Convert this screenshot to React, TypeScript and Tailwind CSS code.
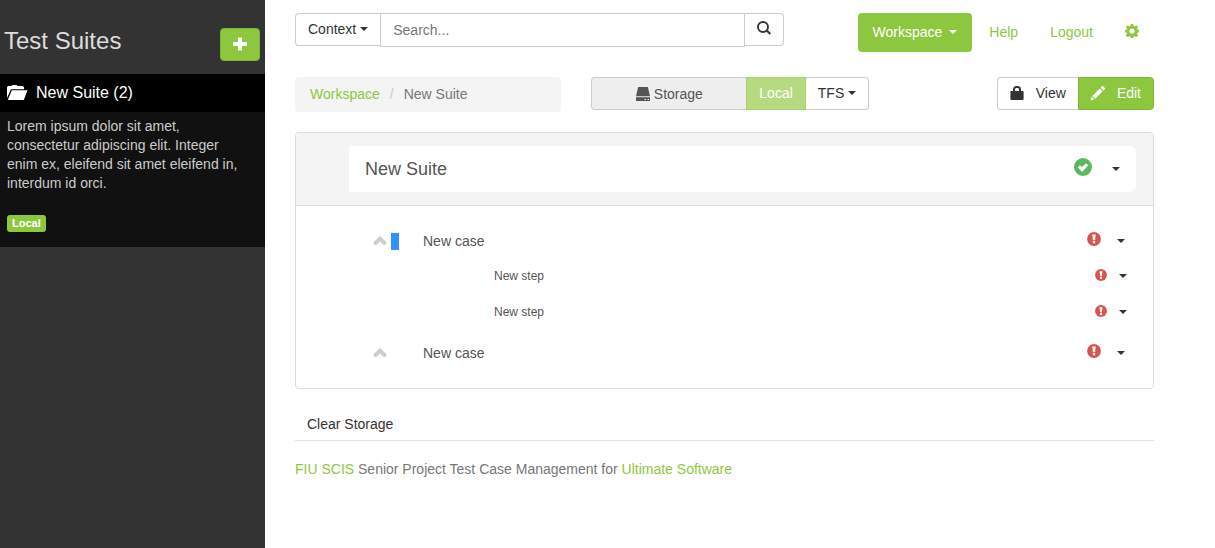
import type { ReactNode } from "react";

function Glyph({ className, children }: { className: string; children: ReactNode }) {
  return (
    <svg viewBox="0 0 14 14" fill="currentColor" aria-hidden="true" className={`shrink-0 ${className}`}>
      {children}
    </svg>
  );
}

function Caret({ className = "" }: { className?: string }) {
  return (
    <svg viewBox="0 0 8 4" fill="currentColor" aria-hidden="true" className={`h-1 w-2 shrink-0 ${className}`}>
      <path d="M0 0h8L4 4z" />
    </svg>
  );
}

function Plus() {
  return (
    <Glyph className="size-3.5">
      <path d="M5 0.5h4v4.500h5v4H9v4.500H5V9H0V5h5z" />
    </Glyph>
  );
}

function FolderOpen() {
  return (
    <svg viewBox="0 0 21 16" fill="currentColor" aria-hidden="true" className="h-4 w-[21px] shrink-0">
      <path d="M0 13V2L1.200 1H4.500L5.500 0h4l1 1H15.800L17 2.200V4.200H4L1.600 9.500z" />
      <path d="M4.800 5.300H20.500L16.800 15H.8z" />
    </svg>
  );
}

function Magnifier() {
  return (
    <Glyph className="size-3.5">
      <circle cx="6" cy="6" r="5" fill="none" stroke="currentColor" strokeWidth="1.900" />
      <path d="M8.800 10.100l1.500-1.500 3.700 3.600-1.500 1.600z" />
    </Glyph>
  );
}

function Gear() {
  return (
    <Glyph className="size-3.5">
      <path
        fillRule="evenodd"
        d="M5.800 0h2.400l.5 2 .9.400 1.800-1.100 1.700 1.700-1.100 1.800.4.900 1.600.4v2.200l-1.600.5-.4.900 1.100 1.800-1.700 1.700-1.800-1.100-.9.400-.5 1.500H5.800l-.5-1.500-.9-.4-1.800 1.100-1.700-1.700L2 9.700l-.4-.9L0 8.300V6.100l1.600-.4.4-.9L.9 3l1.700-1.700 1.800 1.100.9-.4zM7 4.500a2.600 2.600 0 1 0 0 5.200 2.600 2.600 0 0 0 0-5.200z"
      />
    </Glyph>
  );
}

function Drive() {
  return (
    <Glyph className="size-3.5">
      <path d="M2.600 0h8.800q.5 0 .6.500L14 9.300H0L2 .5Q2.100 0 2.600 0z" />
      <path fillRule="evenodd" d="M0 10.300h14v3.100q0 .6-.6.600H.6q-.6 0-.6-.6zM8.500 12v.9h1.500V12zm3 0v.9H13V12z" />
    </Glyph>
  );
}

function Lock() {
  return (
    <Glyph className="size-3.5">
      <path
        fillRule="evenodd"
        d="M1 5h2V3.600A3.600 3.600 0 0 1 6.600 0h.9A3.600 3.600 0 0 1 11 3.600V5h2q.6 0 .6.600V13q0 1-.9 1H1.300q-.9 0-.9-1V5.600Q.4 5 1 5zm4 0h4V3.600A1.500 1.500 0 0 0 7.500 2h-1A1.500 1.500 0 0 0 5 3.600z"
      />
    </Glyph>
  );
}

function Pencil() {
  return (
    <svg viewBox="0 0 16 16" fill="currentColor" aria-hidden="true" className="size-4 shrink-0">
      <path d="M12 1.300q.6-.6 1.200 0l1.600 1.600q.6.600 0 1.200l-1.300 1.300-2.900-2.800z" />
      <path d="M9.800 3.500l2.800 2.800-7.400 7.400-2.800-2.800z" />
      <path d="M1.800 11.800l2.500 2.500L.5 15.500z" />
    </svg>
  );
}

function ChevronUp() {
  return (
    <Glyph className="size-3.5">
      <path d="M7 2l6.900 6.700-2.500 2.900L7 7.400l-4.400 4.200L.1 8.700z" />
    </Glyph>
  );
}

function OkSign() {
  return (
    <Glyph className="size-[18px]">
      <circle cx="7" cy="7" r="7" />
      <path fill="#fff" d="M3 7.300l1.600-1.600 1.600 1.400 3.100-3.100 1.800 1.600-4.800 5.200z" />
    </Glyph>
  );
}

function ExclamationSign({ className }: { className: string }) {
  return (
    <Glyph className={className}>
      <circle cx="7" cy="7" r="6.900" />
      <path fill="#fff" d="M5.200 2.600h3.600L8 8.200H6zM5.800 9.100h2.400v2.200H5.800z" />
    </Glyph>
  );
}

function Sidebar() {
  return (
    <aside className="w-[265px] shrink-0 bg-[#333]">
      <header className="flex h-[74px] items-start justify-between pl-1 pr-[5px] pt-7">
        <h1 className="text-2xl leading-[26px] text-[#ddd]">Test Suites</h1>
        <button
          type="button"
          aria-label="Add suite"
          className="flex h-[33px] w-10 items-center justify-center rounded border border-[#7eb532] bg-[#8dc73f] pb-0.5 text-white"
        >
          <Plus />
        </button>
      </header>
      <section className="bg-[#111] pb-[15px]">
        <h2 className="bg-black">
          <a href="#suite" className="flex h-[38px] items-center gap-2 pl-[7px] text-base text-white">
            <FolderOpen />
            New Suite (2)
          </a>
        </h2>
        <p className="pl-[7px] pr-5 pt-[5px] leading-[19px] text-[#ccc]">
          Lorem ipsum dolor sit amet, consectetur adipiscing elit. Integer enim ex, eleifend sit amet eleifend in,
          interdum id orci.
        </p>
        <span className="ml-[7px] mt-[22px] flex h-[17px] w-fit items-center rounded-[3px] bg-[#8dc73f] px-[5px] text-[11px] font-bold leading-none text-white">
          Local
        </span>
      </section>
    </aside>
  );
}

function TopBar() {
  return (
    <div className="grid grid-cols-12 items-start gap-x-[30px]">
      <form role="search" className="col-span-7 flex items-start">
        <button
          type="button"
          className="flex h-[33px] shrink-0 items-center gap-1 rounded-l border border-r-0 border-[#ccc] px-3 pb-px text-[#333]"
        >
          Context
          <Caret />
        </button>
        <input
          type="text"
          aria-label="Search"
          placeholder="Search..."
          className="h-[34px] min-w-0 flex-1 border border-[#ccc] px-3 outline-none placeholder:text-[#777]"
        />
        <button
          type="submit"
          aria-label="Submit search"
          className="flex h-[33px] shrink-0 items-center rounded-r border border-l-0 border-[#ccc] px-3 pb-[3px] text-[#333]"
        >
          <Magnifier />
        </button>
      </form>
      <nav className="col-span-5 flex justify-end gap-0.5 leading-5 text-[#8dc73f]">
        <a href="#workspace" className="flex h-[39px] items-center gap-[7px] rounded bg-[#8dc73f] px-[15px] pb-px text-white">
          Workspace
          <Caret />
        </a>
        <a href="#help" className="flex h-[39px] items-center px-[15px] pb-px">
          Help
        </a>
        <a href="#logout" className="flex h-[39px] items-center px-[15px] pb-px">
          Logout
        </a>
        <a href="#settings" aria-label="Settings" className="flex h-[39px] items-center px-[15px] pb-[3px]">
          <Gear />
        </a>
      </nav>
    </div>
  );
}

function ToolBar() {
  return (
    <div className="mt-[25px] grid grid-cols-3 items-start gap-x-[30px]">
      <nav aria-label="Breadcrumb">
        <ol className="flex h-[35px] items-center rounded bg-[#f4f4f4] px-[15px] pb-px text-[#777]">
          <li>
            <a href="#workspace" className="text-[#8dc73f]">
              Workspace
            </a>
          </li>
          <li aria-hidden="true" className="px-2.5 text-[#ccc]">
            /
          </li>
          <li>New Suite</li>
        </ol>
      </nav>
      <div className="flex">
        <span className="flex h-[33px] w-[155px] shrink-0 items-center justify-center gap-1 rounded-l border border-r-0 border-[#ccc] bg-[#eee] text-[#555]">
          <Drive />
          Storage
        </span>
        <button type="button" className="h-[33px] shrink-0 border border-[#a9d26f] bg-[#b6da82] px-3 pb-px text-white">
          Local
        </button>
        <button
          type="button"
          className="flex h-[33px] shrink-0 items-center gap-1 rounded-r border border-l-0 border-[#ccc] px-3 pb-px text-[#333]"
        >
          TFS
          <Caret />
        </button>
      </div>
      <div className="flex justify-end">
        <button
          type="button"
          className="flex h-[33px] items-center gap-3 rounded-l border border-r-0 border-[#ccc] px-3 pb-px text-[#333]"
        >
          <Lock />
          View
        </button>
        <button
          type="button"
          className="flex h-[33px] items-center gap-[11px] rounded-r border border-[#7eb532] bg-[#8dc73f] pb-px pl-[11px] pr-3 text-white"
        >
          <Pencil />
          Edit
        </button>
      </div>
    </div>
  );
}

function MenuButton({ label }: { label: string }) {
  return (
    <button type="button" aria-label={label} className="text-[#333]">
      <Caret />
    </button>
  );
}

function CaseItem({ selected = false, steps = [] }: { selected?: boolean; steps?: string[] }) {
  return (
    <li className="pb-[3px] pt-[3px]">
      <div className="flex h-[34px] items-center pl-[77px] pr-7">
        <div className="flex w-[50px] items-center gap-1 text-[#ccc]">
          <button type="button" aria-label="Collapse case">
            <ChevronUp />
          </button>
          {selected && <span className="h-[17px] w-2 bg-[#3390ff]" />}
        </div>
        <span className="flex-1 text-[#555]">New case</span>
        <span className="mr-4 pb-1 text-[#d9534f]">
          <ExclamationSign className="size-3.5" />
        </span>
        <MenuButton label="Case menu" />
      </div>
      {steps.length > 0 && (
        <ul>
          {steps.map((step, index) => (
            <li key={index} className="flex h-9 items-center pl-[198px] pr-[26px] text-xs text-[#555]">
              <span className="flex-1">{step}</span>
              <span className="mr-3 pb-0.5 text-[#d9534f]">
                <ExclamationSign className="size-3" />
              </span>
              <MenuButton label="Step menu" />
            </li>
          ))}
        </ul>
      )}
    </li>
  );
}

function SuitePanel() {
  return (
    <section className="mt-5 rounded border border-[#ddd]">
      <header className="rounded-t-[3px] border-b border-[#ddd] bg-[#f4f4f4] py-[13px] pl-[53px] pr-[17px]">
        <div className="flex h-[46px] items-center rounded-r-md bg-white pl-4 pr-4">
          <h2 className="flex-1 text-lg leading-5 text-[#555]">New Suite</h2>
          <span className="mr-5 pb-1 text-[#5cb85c]">
            <OkSign />
          </span>
          <MenuButton label="Suite menu" />
        </div>
      </header>
      <ul className="py-[15px]">
        <CaseItem selected steps={["New step", "New step"]} />
        <CaseItem />
      </ul>
    </section>
  );
}

export default function App() {
  return (
    <div className="flex min-h-screen bg-white font-['Liberation_Sans',Arial,sans-serif] text-sm leading-5 text-[#333]">
      <Sidebar />
      <main className="min-w-0 flex-1 pl-[30px] pr-[61px] pt-[13px]">
        <TopBar />
        <ToolBar />
        <SuitePanel />
        <div className="mt-[18px] border-b border-[#e0e0e0]">
          <button type="button" className="h-[33px] px-3">
            Clear Storage
          </button>
        </div>
        <footer className="pt-[18px] text-[#777]">
          <a href="#fiu" className="text-[#8dc73f]">
            FIU SCIS
          </a>{" "}
          Senior Project Test Case Management for{" "}
          <a href="#ultimate" className="text-[#8dc73f]">
            Ultimate Software
          </a>
        </footer>
      </main>
    </div>
  );
}
